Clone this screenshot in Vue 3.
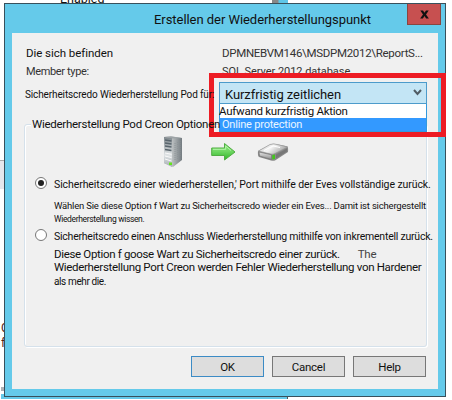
<script setup>
const options = [
  { text: 'Aufwand kurzfristig Aktion', cls: 'o1', active: false },
  { text: 'Online protection', cls: 'o2', active: true },
]
const buttons = ['OK', 'Cancel', 'Help']
</script>

<template>
  <div class="desktop">
    <span class="behind enabled">Enabled</span>
    <i class="behind line"></i>
    <i class="behind panel"></i>
    <span class="behind frag c">C</span>
    <span class="behind frag f">f</span>
    <i class="behind bar"></i>
    <i class="behind strip"></i>
    <div class="dialog">
      <header class="titlebar">
        <h1><span class="t title">Erstellen der Wiederherstellungspunkt</span></h1>
        <button class="close" aria-label="Close">
          <svg width="9" height="9" viewBox="0 0 9 9"><path d="M0.3 0.5H3L4.5 2.8L6 .5H8.7L6 4.4L8.9 8.5H6.1L4.5 6.1L2.9 8.5H.1L3 4.4Z" fill="#111" /></svg>
        </button>
      </header>
      <main class="client">
        <div class="row r1"><span class="t k1">Die sich befinden</span><span class="t v1">DPMNEBVM146\MSDPM2012\ReportS...</span></div>
        <div class="row r2"><span class="t k2">Member type:</span><span class="t v2">SQL Server 2012 database</span></div>
        <div class="row r3">
          <span class="t k3">Sicherheitscredo Wiederherstellung Pod für:</span>
          <div class="combo">
            <div class="field">
              <span class="t sel">Kurzfristig zeitlichen</span>
              <svg width="9" height="7" viewBox="0 0 9 7"><path d="M1 1L4.5 5L8 1" fill="none" stroke="#505c64" stroke-width="2" /></svg>
            </div>
            <div class="list">
              <div v-for="o in options" :key="o.text" class="option" :class="{ active: o.active }"><span class="t" :class="o.cls">{{ o.text }}</span></div>
            </div>
          </div>
          <div class="highlight"></div>
        </div>
        <section class="group">
          <div class="legend"><span class="t lg">Wiederherstellung Pod Creon Optionen</span></div>
          <div class="icons">
            <svg class="server" width="20" height="32" viewBox="0 0 20 32">
              <defs>
                <linearGradient id="side" x2="1"><stop stop-color="#858b8e" /><stop offset=".4" stop-color="#c2c6c7" /><stop offset="1" stop-color="#737b80" /></linearGradient>
                <linearGradient id="front" y2="1" x2="0"><stop stop-color="#7d868b" /><stop offset=".6" stop-color="#dfe3e5" /><stop offset="1" stop-color="#a7afb3" /></linearGradient>
              </defs>
              <path d="M1 1L8 .5L19 2V24L10 31L1 27Z" fill="url(#side)" />
              <path d="M1 1L9 2V31L1 27Z" fill="url(#front)" />
              <path d="M1 1L8 .3L19 2L9 2.5Z" fill="#9da3a6" />
              <path d="M2 4L8.5 5M2 7L8.5 8M2 10L8.5 11M2 13.5L8.5 14.5" stroke="#59656d" stroke-width="1.3" />
              <path d="M2 17L8.5 18.3M2 20L8.5 21.6M2 23L8.5 25" stroke="#fafafa" />
              <path d="M12 7V24M14.500 6V23M17 5V21" stroke="#8b9295" stroke-width=".8" stroke-dasharray="1 1" />
              <rect x="6" y="26.500" width="3" height="2.500" fill="#64e51b" />
            </svg>
            <svg class="arrow" width="25" height="20" viewBox="0 0 25 20">
              <defs><linearGradient id="green" x2="0" y2="1"><stop stop-color="#85e878" /><stop offset=".45" stop-color="#72d965" /><stop offset="1" stop-color="#2eb728" /></linearGradient></defs>
              <path d="M.7 6H13.500V1.500L24 10L13.500 18V13.500H.7Z" fill="url(#green)" stroke="#51ad43" />
              <path d="M2 7.300H14.700V4L20 8.500" fill="none" stroke="#b6f4aa" />
            </svg>
            <svg class="drive" width="32" height="19" viewBox="0 0 32 19">
              <defs>
                <linearGradient id="metal" x2="1" y2=".4"><stop stop-color="#c3c3c3" /><stop offset=".5" stop-color="#f4f4f4" /><stop offset="1" stop-color="#a5a5a5" /></linearGradient>
                <linearGradient id="face" x2="0" y2="1"><stop stop-color="#e6e6e6" /><stop offset="1" stop-color="#8c8c8c" /></linearGradient>
              </defs>
              <path d="M1 8L13 1.500Q16 .2 19 1L30 3.300Q31.500 4 31 9L18 17.500Q16 18 14 17.500L2 14Q.5 13 1 8Z" fill="#8a8a8a" />
              <path d="M1.500 8L13 1.500Q16 .5 19 1.300L30.500 4L18 10.500Q16 11.500 14 11Z" fill="url(#metal)" stroke="#999" stroke-width=".6" />
              <path d="M2 9L14.500 11.800V16.500L2.500 13Z" fill="url(#face)" stroke="#777" stroke-width=".7" />
              <path d="M19 11.500L30 5.500V8.500L19 15.500Z" fill="#777" />
              <path d="M7 7.500L16 3L23 4.500" fill="none" stroke="#fff" />
              <path d="M15.300 12L18 11.500V16L15.300 16.500Z" fill="#43c51d" />
            </svg>
          </div>
          <div class="choice first">
            <i class="radio on"></i><span class="t c1">Sicherheitscredo einer wiederherstellen,' Port mithilfe der Eves vollständige zurück.</span>
          </div>
          <p class="p1"><span class="t d1">Wählen Sie diese Option f Wart zu Sicherheitscredo wieder ein Eves... Damit ist sichergestellt</span></p>
          <p class="p2"><span class="t d2">Wiederherstellung wissen.</span></p>
          <div class="choice second">
            <i class="radio"></i><span class="t c2">Sicherheitscredo einen Anschluss Wiederherstellung mithilfe von inkrementell zurück.</span>
          </div>
          <p class="p3"><span class="t d3">Diese Option f goose Wart zu Sicherheitscredo einer zurück.</span><span class="t the">The</span></p>
          <p class="p4"><span class="t d4">Wiederherstellung Port Creon werden Fehler Wiederherstellung von Hardener</span></p>
          <p class="p5"><span class="t d5">als mehr die.</span></p>
        </section>
        <footer class="actions">
          <button v-for="b in buttons" :key="b" class="btn" :class="{ primary: b === 'OK' }"><span class="t">{{ b }}</span></button>
        </footer>
      </main>
    </div>
  </div>
</template>

<style>
body { margin: 0; background: #fff; overflow: hidden; }
</style>
<style scoped>
* { box-sizing: border-box; }
.desktop { position: relative; width: 452px; height: 400px; padding: 3px 0 0 4px; overflow: hidden; background: #fff; font-family: Roboto, "Liberation Sans", sans-serif; font-size: 12px; color: #111; }
.t { white-space: nowrap; flex: none; }
.behind { position: absolute; display: block; }
.enabled { left: 60px; top: -9px; font-size: 12.5px; line-height: 15px; }
.line { left: 272px; top: 0; width: 16px; height: 3px; background: linear-gradient(90deg, #888 0 6px, #5fc6e7 7px); }
.panel { left: 0; top: 160px; width: 4px; height: 29px; background: #e5e7ec; border-top: 1px solid #aaa; }
.frag { left: 1px; font-size: 12px; line-height: 12px; color: #532418; }
.c { top: 322px; }
.f { top: 337px; }
.bar { left: 1px; top: 387px; width: 4px; height: 4px; background: #aeb2b5; }
.strip { left: 1px; top: 394px; width: 287px; height: 5px; background: #65c9e9; border-right: 1px solid #555; }
.dialog { position: relative; width: 442px; height: 394px; border: 1px solid #38505b; background: #65caea; padding: 0 7px 7px; }
.titlebar { height: 29px; display: flex; justify-content: flex-end; align-items: flex-start; }
h1 { margin: 0; flex: 1; padding-left: 142px; font-size: 13px; font-weight: 400; line-height: 31px; display: flex; }
.close { width: 34px; height: 21px; margin-right: -3px; padding: 0; border: 1px solid #8a453f; border-top: 0; background: #c75050; display: flex; align-items: center; justify-content: center; }
.client { height: 356px; background: #f0f0f0; display: flex; flex-direction: column; }
.row { display: flex; align-items: center; padding-left: 14px; }
.r1 { height: 19px; margin-top: 10px; }
.r2 { height: 19px; }
.k1, .k2 { width: 196px; }
.r3 { position: relative; height: 26px; padding-left: 13px; }
.combo { position: absolute; z-index: 3; left: 207px; top: 1px; width: 208px; height: 50px; }
.field { height: 22px; border: 1px solid #4c9bcb; background: #c3e5f5; display: flex; align-items: center; justify-content: space-between; padding: 3px 4px 0 5px; }
.field svg { margin-bottom: 4px; }
.list { border: 1px solid #3399dd; border-top: 0; height: 28px; }
.option { height: 14px; background: #fff; display: flex; align-items: center; }
.active { height: 13px; background: #3399ff; color: #e9f5ff; }
.highlight { position: absolute; z-index: 2; left: 197px; top: -8px; width: 237px; height: 64px; border: 5px solid #ed1c24; }
.group { position: relative; width: 403px; height: 223px; margin: 17px 0 0 12px; border: 1px solid #d5e1eb; border-radius: 3px; box-shadow: inset 1px 1px #fff, 1px 1px #fff; }
.legend { position: relative; z-index: 1; height: 15px; width: 188px; margin: -9px 0 0 6px; padding-left: 1px; background: linear-gradient(90deg, #f0f0f0 177px, transparent 177px); display: flex; align-items: center; }
.lg { position: relative; z-index: 4; }
.icons { height: 32px; margin: 5px 0 0 138px; display: flex; align-items: center; }
.arrow { margin-left: 28px; }
.drive { margin-left: 21px; }
.choice { display: flex; align-items: center; height: 14px; padding-left: 10px; gap: 7px; }
.first { margin-top: 9px; }
.second { margin-top: 4px; }
.radio { flex: none; width: 12px; height: 12px; margin-top: -2px; border: 1px solid #777; border-radius: 50%; background: #fff; display: flex; align-items: center; justify-content: center; }
.on::after { content: ""; width: 6px; height: 6px; border-radius: 50%; background: #222; }
p { margin: 0; padding-left: 29px; display: flex; align-items: center; height: 13px; }
.p1 { margin-top: 7px; height: 14px; }
.p3 { margin-top: 4px; }
.p5 { height: 16px; }
.legend { z-index: 4; }
.the { margin-left: 18px; color: #444; font-size: 11.5px; letter-spacing: -.3px; }
.actions { display: flex; gap: 8px; justify-content: flex-end; padding: 9px 12px 0 0; }
.btn { width: 73px; height: 21px; border: 1px solid #777; background: #ddd; padding: 0; font: 11.5px Roboto, sans-serif; letter-spacing: -.25px; color: #111; }
.primary { border-color: #3c8bc5; }
.title { font-size: 13px; letter-spacing: -.05px; }
.k1 { font-size: 11.5px; letter-spacing: -.05px; }
.v1 { font-size: 11.5px; letter-spacing: -.3px; color: #333; }
.k2, .v2 { font-size: 11px; color: #333; }
.k2 { letter-spacing: -.35px; }
.v2 { letter-spacing: -.05px; }
.k3 { position: relative; z-index: 3; font-size: 10px; letter-spacing: -.13px; }
.sel { font-size: 13px; letter-spacing: -.08px; }
.o1 { font-size: 11.5px; letter-spacing: -.26px; margin-left: -1px; }
.o2 { font-size: 11px; letter-spacing: -.2px; margin-left: 2px; }
.lg { font-size: 11.5px; letter-spacing: -.27px; }
.c1 { font-size: 10.5px; letter-spacing: -.09px; }
.c2 { font-size: 10.5px; letter-spacing: -.23px; }
.d1 { font-size: 9.5px; letter-spacing: -.19px; }
.d2 { font-size: 8.5px; letter-spacing: -.35px; }
.d3 { font-size: 11.5px; letter-spacing: -.33px; }
.d4 { font-size: 11.5px; letter-spacing: -.33px; }
.d5 { font-size: 10px; letter-spacing: -.38px; }
</style>
